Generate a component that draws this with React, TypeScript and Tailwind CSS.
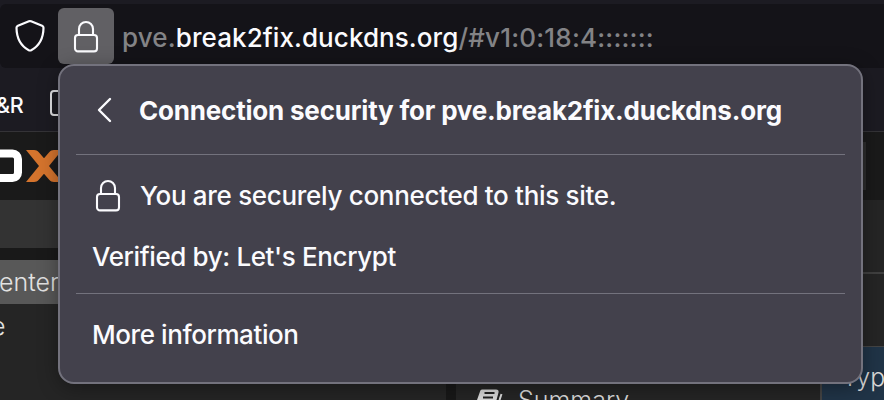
import type { ReactNode } from "react";

function LockIcon({ className = "" }: { className?: string }) {
  return (
    <svg width="26" height="34" viewBox="0 0 26 34" fill="none" stroke="currentColor" strokeWidth="2.1" className={className}>
      <path d="M6 15V9a7 7 0 0 1 14 0v6" />
      <rect x="2" y="15" width="22" height="16.4" rx="3" />
    </svg>
  );
}

function ShieldIcon() {
  return (
    <svg width="32" height="36" viewBox="0 0 32 36" fill="none" stroke="#fbfbfe" strokeWidth="2.2" strokeLinejoin="round" className="shrink-0">
      <path d="M14.900 3.300 3.900 7.700C3 8.100 2.500 8.800 2.500 9.700c.1 10.500 4.100 18 12.300 22.500.8.4 1.600.4 2.400 0C25.400 27.700 29.400 20.200 29.500 9.700c0-.9-.5-1.600-1.400-2L17.100 3.300a3 3 0 0 0-2.200 0Z" />
    </svg>
  );
}

function AddressBar() {
  return (
    <div className="flex h-16 items-center rounded-l-md bg-[#141318] pl-[14px]">
      <ShieldIcon />
      <div className="ml-3 flex h-14 w-14 shrink-0 items-center justify-center rounded-md bg-[#616064] pt-px text-[#fbfbfe]">
        <LockIcon />
      </div>
      <div className="ml-2 mt-1 whitespace-pre text-[26px] font-medium leading-8 text-[#838386]">
        <span className="tracking-[0.15px]">pve.</span>
        <span className="tracking-[0.08px] text-[#fbfbfe]">break2fix.duckdns.org</span>
        <span className="tracking-[0.2px]">/#v1:0:18:4:::::::</span>
      </div>
    </div>
  );
}

function BookmarksBar() {
  return (
    <div className="flex h-[64px] items-start border-b border-[#343337] bg-[#1c1b22] text-[#fbfbfe]">
      <div className="w-[50px] pt-[23px]">
        <span className="-ml-[4px] text-[21.5px] font-medium leading-7 tracking-[-0.3px]">&amp;R</span>
      </div>
      <div className="mt-[22px] h-[26px] w-6 rounded-[4px] border-2 border-[#e0e0e3]" />
    </div>
  );
}

function LogoRow() {
  return (
    <div className="flex h-[68px] items-start justify-between bg-[#1a1a1a]">
      <svg width="70" height="68" viewBox="0 0 70 68">
        <rect x="-20" y="21.500" width="38" height="24.500" rx="5.500" fill="none" stroke="#fff" strokeWidth="8" />
        <path d="M26 18h8c2 0 3.500.8 4.800 2.200l5.200 6 5.200-6C50.500 18.800 52 18 54 18h8L49 34 62 50h-8c-2 0-3.500-.8-4.800-2.200L44 41.800l-5.200 6C37.500 49.200 36 50 34 50h-8l13-16Z" fill="#d5742d" />
      </svg>
      <div className="mr-[18px] mt-[10px] h-12 w-10 bg-[#2d2d2d]" />
    </div>
  );
}

function TreePane() {
  return (
    <div className="w-[446px] shrink-0 text-[25px] font-light leading-[30px] text-[#e2e2e2]">
      <div className="h-12 bg-[#333]" />
      <div className="h-3 bg-[#191919]" />
      <div className="flex h-11 items-center bg-[#585858]">
        <span className="-ml-px">enter</span>
      </div>
      <div className="flex h-11 items-center">
        <span className="-ml-[9px]">e</span>
      </div>
    </div>
  );
}

function ContentPane() {
  return (
    <div className="flex grow flex-col bg-[#252525] text-[25px] font-light text-[#dadada]">
      <div className="h-[74px] border-b-2 border-[#404040]" />
      <div className="flex grow">
        <div className="flex w-[364px] items-end overflow-hidden">
          <svg width="28" height="12" viewBox="0 0 28 12" className="ml-5 shrink-0">
            <path d="M6 1.500H20c2 0 3 1 2.500 3L20.500 12H1L4 3.500C4.400 2.200 5 1.500 6 1.500Z" fill="#dadada" />
            <path d="M8.500 5h10M7 9.500h10" stroke="#222" strokeWidth="1.800" />
            <path d="m25.500 6-2 6" stroke="#dadada" strokeWidth="2" />
          </svg>
          <span className="-mb-[16px] ml-[14px] leading-8">Summary</span>
        </div>
        <div className="mt-[72px] grow border-l-2 border-t border-[#444] bg-[#203447] pl-[20px] pt-[14px] leading-8">
          Typ
        </div>
      </div>
    </div>
  );
}

function PanelRow({ children, className }: { children: ReactNode; className: string }) {
  return <div className={`flex items-center whitespace-nowrap ${className}`}>{children}</div>;
}

function SecurityPanel() {
  return (
    <section className="absolute left-[58px] top-16 h-80 w-[805px] rounded-2xl border-2 border-[#73727d] bg-[#43414c] px-4 text-[26px] font-medium leading-8 text-[#fbfbfe] shadow-[0_4px_20px_rgba(0,0,0,0.35)]">
      <PanelRow className="h-[88px] pl-5">
        <svg width="16" height="28" viewBox="0 0 16 28" fill="none" stroke="currentColor" strokeWidth="2.400" strokeLinecap="round" strokeLinejoin="round">
          <path d="M14 3 3 14l11 11" />
        </svg>
        <h1 className="ml-[27px] mt-0.5 font-bold tracking-[-0.2px]">Connection security for pve.break2fix.duckdns.org</h1>
      </PanelRow>
      <div className="h-px bg-[#73727d]" />
      <PanelRow className="h-[82px] pl-[19px]">
        <LockIcon />
        <span className="ml-[19px] tracking-[-0.31px]">You are securely connected to this site.</span>
      </PanelRow>
      <PanelRow className="h-[56px] items-start pl-4">
        <span className="mt-1 tracking-[-0.38px]">Verified by: Let's Encrypt</span>
      </PanelRow>
      <div className="h-px bg-[#73727d]" />
      <PanelRow className="h-[82px] pl-4">
        <span className="tracking-[-0.42px]">More information</span>
      </PanelRow>
    </section>
  );
}

export default function App() {
  return (
    <main className="relative flex h-[400px] w-[884px] flex-col overflow-hidden bg-[#1c1b22] pt-1 font-['Inter','Liberation_Sans',sans-serif]">
      <AddressBar />
      <BookmarksBar />
      <LogoRow />
      <div className="flex h-[200px] bg-[#252525]">
        <TreePane />
        <div className="mt-[60px] w-[10px] shrink-0 bg-[#181818]" />
        <ContentPane />
      </div>
      <SecurityPanel />
    </main>
  );
}
